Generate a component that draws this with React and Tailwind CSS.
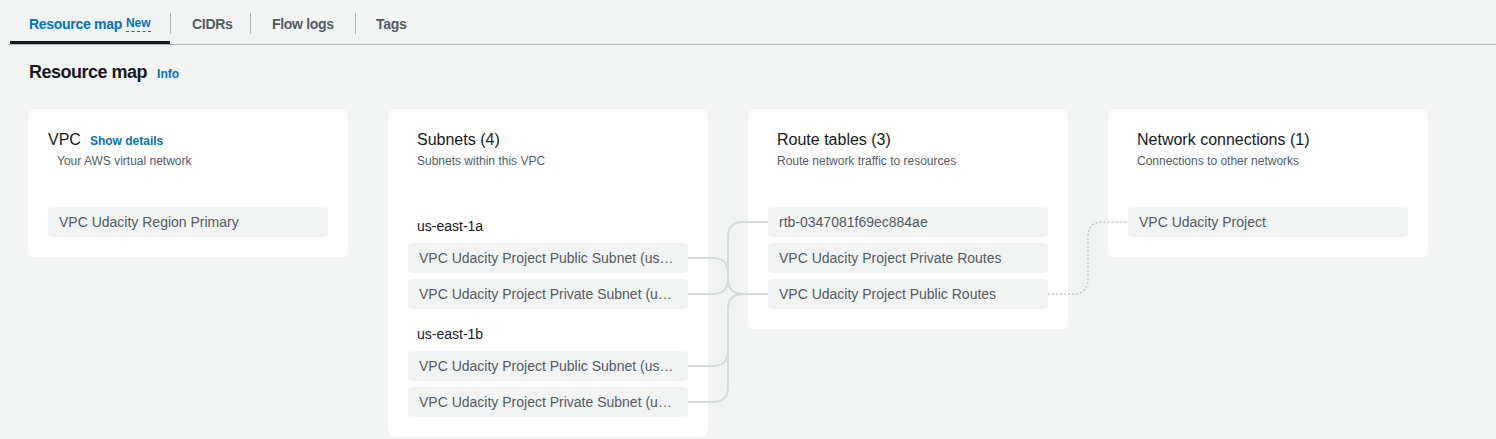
import React from 'react'

const FONT = { fontFamily: '"Liberation Sans", Arial, sans-serif' }

const tabs = [
  { label: 'Resource map', badge: 'New', active: true, w: 'w-[160px]', pl: 'pl-[19px]' },
  { label: 'CIDRs', w: 'w-[79px]', pl: 'pl-[21px]' },
  { label: 'Flow logs', w: 'w-[104px]', pl: 'pl-[21px]' },
  { label: 'Tags', w: 'w-[80px]', pl: 'pl-[20px]' },
]

const Row = ({ children }) => (
  <div className="h-[30px] flex items-center bg-[#f2f3f3] rounded-sm px-[11px] text-sm text-[#545b64] min-w-0">
    <span className="truncate">{children}</span>
  </div>
)

const CardHeader = ({ title, subtitle }) => (
  <div className="px-[9px]">
    <h3 className="text-base leading-[22px] text-[#16191f]">{title}</h3>
    <p className="mt-0.5 text-xs leading-4 text-[#545b64]">{subtitle}</p>
  </div>
)

const Card = ({ children }) => (
  <div className="w-[320px] shrink-0 bg-white rounded-lg px-5 pt-5 pb-5">{children}</div>
)

// connectors between the cards, page coordinates
const Connectors = () => (
  <svg
    className="absolute top-0 left-0 pointer-events-none"
    width="1496"
    height="439"
    viewBox="0 0 1496 439"
    fill="none"
  >
    <g stroke="#d5dbdb" strokeWidth="2">
      <path d="M688 258 H713 Q728 258 728 273 V279 Q728 294 743 294 H768" />
      <path d="M688 294 H713 Q728 294 728 279" />
      <path d="M688 366 H713 Q728 366 728 351 V309 Q728 294 743 294" />
      <path d="M688 402 H713 Q728 402 728 387 V309 Q728 294 743 294" />
      <path d="M768 222 H743 Q728 222 728 237 V279" />
    </g>
    <path
      d="M1048 294 H1073 Q1088 294 1088 279 V237 Q1088 222 1103 222 H1128"
      stroke="#c6cccc"
      strokeWidth="1.5"
      strokeDasharray="2 2"
    />
  </svg>
)

export default function App() {
  return (
    <div className="relative min-h-[439px] bg-[#f2f3f3] overflow-hidden" style={FONT}>
      {/* tabs */}
      <div className="ml-2 h-[45px] flex items-stretch border-b border-[#aab7b8]">
        <div className="w-[2px]" />
        {tabs.map((t, i) => (
          <div key={t.label} className="flex items-stretch">
            {i > 0 && <div className="w-px bg-[#aab7b8] mt-[13px] mb-[10px]" />}
            <div
              className={`${t.w} ${t.pl} relative flex items-center pt-[3px] text-sm font-bold tracking-[-0.3px] ${
                t.active ? 'text-[#0073bb]' : 'text-[#545b64]'
              }`}
            >
              <span>{t.label}</span>
              {t.badge && (
                <span className="ml-[4px] text-xs tracking-normal border-b border-dashed border-[#0073bb] leading-[15px]">
                  {t.badge}
                </span>
              )}
              {t.active && <div className="absolute left-0 right-0 bottom-0 h-[3px] bg-[#16191f]" />}
            </div>
          </div>
        ))}
      </div>

      {/* heading */}
      <div className="mt-[15px] pl-[29px] flex items-baseline gap-[10px]">
        <h2 className="text-lg leading-6 font-bold tracking-[-0.5px] text-[#16191f]">Resource map</h2>
        <span className="text-xs font-bold text-[#0073bb]">Info</span>
      </div>

      {/* cards */}
      <div className="mt-[25px] pl-7 flex items-start gap-10">
        <Card>
          <div className="flex items-baseline justify-start">
            <span className="text-base leading-[22px] text-[#16191f]">VPC</span>
            <span className="ml-[9px] text-xs font-bold text-[#0073bb]">Show details</span>
          </div>
          <p className="mt-0.5 pl-[9px] text-xs leading-4 text-[#545b64]">Your AWS virtual network</p>
          <div className="mt-[38px]">
            <Row>VPC Udacity Region Primary</Row>
          </div>
        </Card>

        <Card>
          <CardHeader title="Subnets (4)" subtitle="Subnets within this VPC" />
          <div className="mt-[47px] pl-[9px] text-sm leading-5 text-[#16191f]">us-east-1a</div>
          <div className="mt-[7px] flex flex-col gap-1.5">
            <Row>VPC Udacity Project Public Subnet (us-east-1a)</Row>
            <Row>VPC Udacity Project Private Subnet (us-east-1a)</Row>
          </div>
          <div className="mt-[15px] pl-[9px] text-sm leading-5 text-[#16191f]">us-east-1b</div>
          <div className="mt-[7px] flex flex-col gap-1.5">
            <Row>VPC Udacity Project Public Subnet (us-east-1b)</Row>
            <Row>VPC Udacity Project Private Subnet (us-east-1b)</Row>
          </div>
        </Card>

        <Card>
          <CardHeader title="Route tables (3)" subtitle="Route network traffic to resources" />
          <div className="mt-[38px] flex flex-col gap-1.5">
            <Row>rtb-0347081f69ec884ae</Row>
            <Row>VPC Udacity Project Private Routes</Row>
            <Row>VPC Udacity Project Public Routes</Row>
          </div>
        </Card>

        <Card>
          <CardHeader title="Network connections (1)" subtitle="Connections to other networks" />
          <div className="mt-[38px]">
            <Row>VPC Udacity Project</Row>
          </div>
        </Card>
      </div>

      <Connectors />
    </div>
  )
}
